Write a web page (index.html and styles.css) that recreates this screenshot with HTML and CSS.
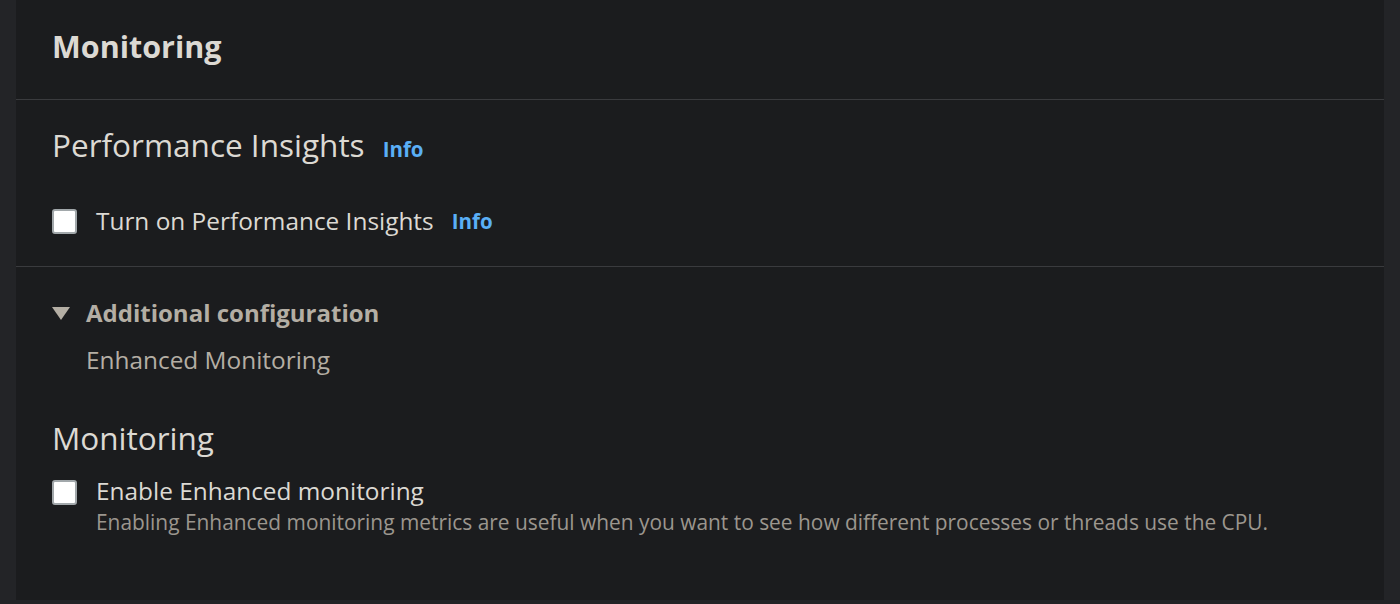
FILE: index.html
```html
<!DOCTYPE html>
<html>
<head>
<meta charset="utf-8">
<link rel="stylesheet" href="styles.css">
</head>
<body>
<div class="panel">
  <div class="panel-header">
    <h1 class="title">Monitoring</h1>
  </div>
  <div class="section pi">
    <div class="heading-row">
      <h2 class="h2">Performance Insights</h2>
      <span class="info">Info</span>
    </div>
    <div class="check-row one">
      <span class="checkbox"></span>
      <span class="label">Turn on Performance Insights</span>
      <span class="info info-sm">Info</span>
    </div>
  </div>
  <div class="section extra">
    <div class="expander">
      <span class="caret"></span>
      <span class="exp-title">Additional configuration</span>
    </div>
    <div class="sub">Enhanced Monitoring</div>
    <h2 class="h2 mon">Monitoring</h2>
    <div class="check-row two">
      <span class="checkbox"></span>
      <div class="label-col">
        <span class="label">Enable Enhanced monitoring</span>
        <span class="desc">Enabling Enhanced monitoring metrics are useful when you want to see how different processes or threads use the CPU.</span>
      </div>
    </div>
  </div>
</div>
</body>
</html>
```

FILE: styles.css
```css
* { box-sizing: border-box; }
html, body { margin: 0; padding: 0; }
body {
  background: #232427;
  width: 1400px;
  height: 604px;
  overflow: hidden;
  font-family: "Open Sans", "Noto Sans", sans-serif;
  color: #d9d6d0;
}
.panel {
  margin-left: 16px;
  width: 1368px;
  height: 600px;
  background: #1b1c1e;
}
.panel-header {
  height: 100px;
  padding: 24px 36px 0;
  border-bottom: 1px solid #3a3b3e;
}
.title {
  margin: 0;
  font-size: 30.5px;
  line-height: 44px;
  font-weight: 700;
  color: #dcd9d3;
}
.section { padding: 0 36px; }
.pi {
  height: 167px;
  border-bottom: 1px solid #3a3b3e;
  padding-top: 23px;
}
.heading-row {
  display: flex;
  align-items: baseline;
  gap: 18px;
}
.h2 {
  margin: 0;
  font-size: 31.5px;
  line-height: 44px;
  font-weight: 400;
  color: #dcd9d3;
}
.info {
  color: #5aaff6;
  font-weight: 700;
  font-size: 20.5px;
}
.info-sm { margin-left: 18px; }
.check-row {
  display: flex;
  align-items: center;
}
.one { margin-top: 38px; }
.checkbox {
  width: 25px;
  height: 25px;
  background: #ffffff;
  border: 2px solid #a2a8ab;
  border-radius: 3px;
  flex: none;
  margin-right: 19px;
}
.label {
  font-size: 24.4px;
  line-height: 32px;
  color: #dcd9d3;
}
.extra { padding-top: 30px; }
.expander {
  display: flex;
  align-items: center;
}
.caret {
  width: 0;
  height: 0;
  border-left: 9px solid transparent;
  border-right: 9px solid transparent;
  border-top: 13px solid #b4aea4;
  margin-right: 16px;
}
.exp-title {
  font-size: 24px;
  line-height: 32px;
  font-weight: 700;
  color: #b4aea4;
}
.sub {
  margin-left: 34px;
  margin-top: 15px;
  font-size: 24.4px;
  line-height: 32px;
  color: #b4aea4;
}
.mon { margin-top: 40px; }
.two {
  align-items: flex-start;
  margin-top: 15px;
}
.two .checkbox { margin-top: 4.5px; }
.label-col {
  display: flex;
  flex-direction: column;
}
.desc {
  font-size: 20.9px;
  line-height: 30px;
  color: #9b968e;
}
```
